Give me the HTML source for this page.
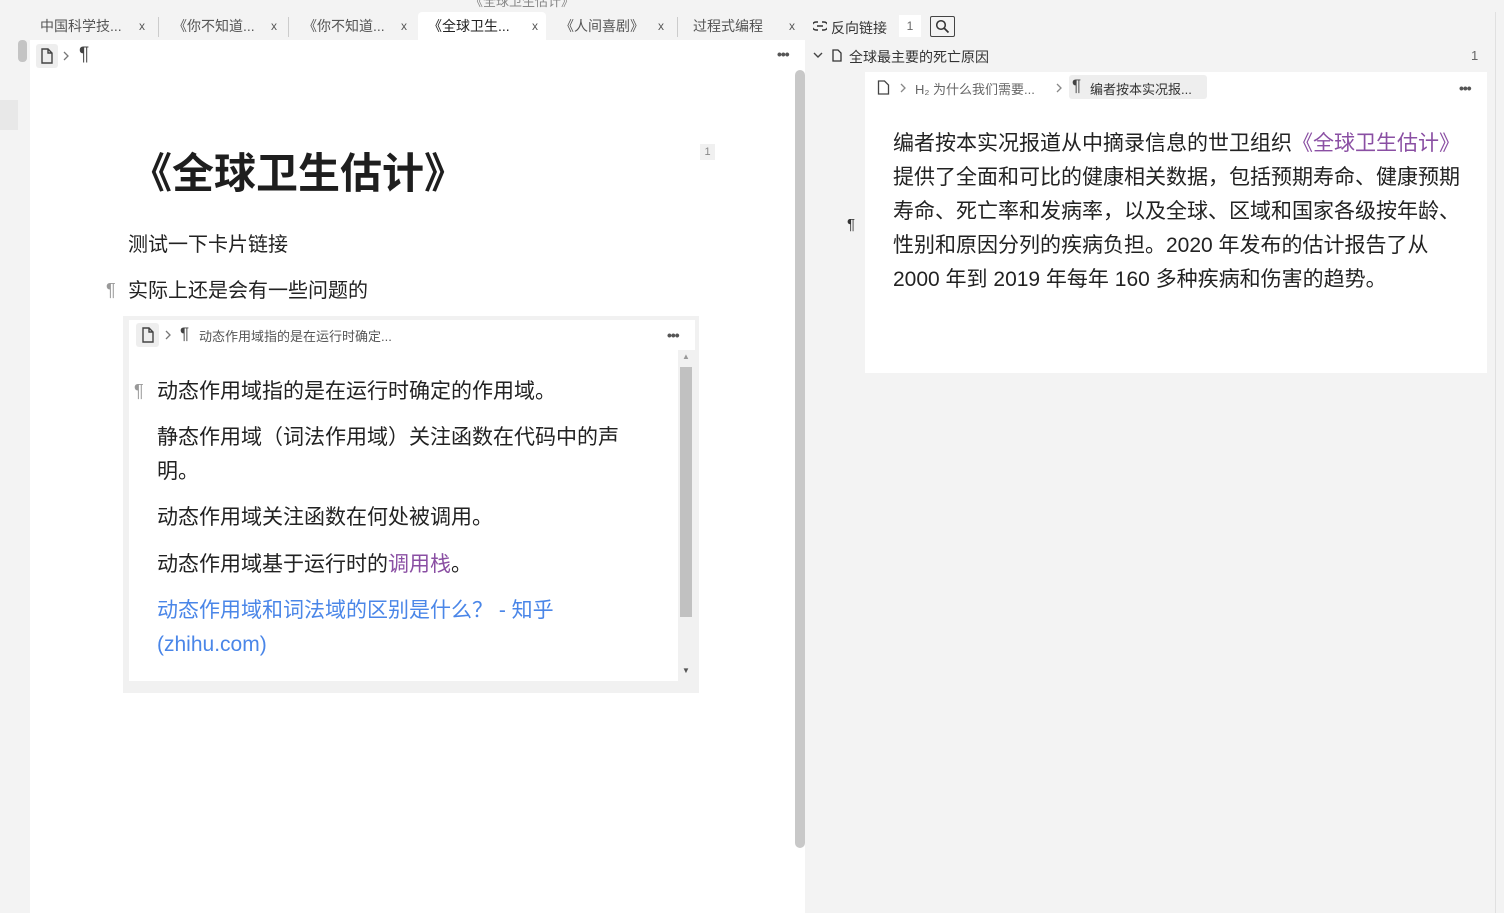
<!DOCTYPE html>
<html><head><meta charset="utf-8"><style>
*{margin:0;padding:0;box-sizing:border-box}
body{width:1504px;height:913px;overflow:hidden;background:#f3f3f3;font-family:"Liberation Sans","Noto Sans CJK SC",sans-serif;color:#222;position:relative}
.a{position:absolute;white-space:nowrap}
.tab{position:absolute;top:12px;height:28px;font-size:14px;color:#555;line-height:28px;padding-left:10px}
.tab .x{position:absolute;right:8px;top:0;font-size:12px;color:#555}
.sep{position:absolute;top:17px;width:1px;height:20px;background:#ccc}
.t{font-size:21px;line-height:34px;color:#222}
.dots{font-size:14px;color:#555;letter-spacing:-1px;font-weight:bold}
.chev{position:absolute}
</style></head><body>
<div class="a" style="left:470px;top:-9px;font-size:13px;color:#888">《全球卫生估计》</div>
<div class="tab" style="left:30px;width:123px">中国科学技...<span class="x">x</span></div>
<div class="sep" style="left:158px"></div>
<div class="tab" style="left:163px;width:122px">《你不知道...<span class="x">x</span></div>
<div class="sep" style="left:288px"></div>
<div class="tab" style="left:293px;width:122px">《你不知道...<span class="x">x</span></div>
<div class="tab" style="left:418px;width:128px;background:#fff;color:#222;border-radius:4px 4px 0 0">《全球卫生...<span class="x">x</span></div>
<div class="tab" style="left:550px;width:122px">《人间喜剧》<span class="x">x</span></div>
<div class="sep" style="left:677px"></div>
<div class="tab" style="left:683px;width:120px">过程式编程<span class="x">x</span></div>
<div class="a" style="left:0;top:100px;width:18px;height:30px;background:#e8e8e8"></div>
<div class="a" style="left:18px;top:40px;width:9px;height:22px;background:#c4c4c4;border-radius:4px"></div>
<div class="a" style="left:30px;top:40px;width:775px;height:873px;background:#fff"></div>
<div class="a" style="left:36px;top:44px;width:22px;height:24px;background:#eee;border-radius:3px"></div>
<svg class="a" style="left:40px;top:48px" width="14" height="16" viewBox="0 0 14 16"><path d="M2 1h6l4 4v10H2z M8 1v4h4" fill="none" stroke="#444" stroke-width="1.4"/></svg>
<svg class="chev" style="left:63px;top:51px" width="7" height="10" viewBox="0 0 7 10"><path d="M1 1l4 4-4 4" fill="none" stroke="#777" stroke-width="1.3"/></svg>
<div class="a" style="left:79px;top:44px;font-size:19px;color:#444">¶</div>
<div class="a dots" style="left:777px;top:46px">•••</div>
<div class="a" style="left:795px;top:70px;width:10px;height:778px;background:#c8c8c8;border-radius:5px"></div>
<div class="a" style="left:130px;top:140px;font-size:42px;font-weight:bold;color:#1e1e1e">《全球卫生估计》</div>
<div class="a" style="left:700px;top:144px;width:15px;height:16px;background:#f0f0f0;font-size:11px;color:#888;text-align:center;line-height:16px">1</div>
<div class="a t" style="left:128px;top:228px;font-size:20px">测试一下卡片链接</div>
<div class="a" style="left:106px;top:280px;font-size:18px;color:#999">¶</div>
<div class="a t" style="left:128px;top:274px;font-size:20px">实际上还是会有一些问题的</div>
<div class="a" style="left:123px;top:316px;width:576px;height:377px;background:#f1f1f1"></div>
<div class="a" style="left:129px;top:320px;width:566px;height:361px;background:#fff"></div>
<div class="a" style="left:136px;top:323px;width:23px;height:24px;background:#eee;border-radius:3px"></div>
<svg class="a" style="left:141px;top:327px" width="14" height="16" viewBox="0 0 14 16"><path d="M2 1h6l4 4v10H2z M8 1v4h4" fill="none" stroke="#444" stroke-width="1.4"/></svg>
<svg class="chev" style="left:165px;top:330px" width="7" height="10" viewBox="0 0 7 10"><path d="M1 1l4 4-4 4" fill="none" stroke="#777" stroke-width="1.3"/></svg>
<div class="a" style="left:180px;top:324px;font-size:17px;color:#444">¶</div>
<div class="a" style="left:199px;top:326px;font-size:13px;color:#555">动态作用域指的是在运行时确定...</div>
<div class="a dots" style="left:667px;top:327px">•••</div>
<div class="a" style="left:678px;top:350px;width:17px;height:331px;background:#f1f1f1"></div>
<div class="a" style="left:680px;top:367px;width:12px;height:250px;background:#c1c1c1"></div>
<div class="a" style="left:682px;top:352px;font-size:8px;color:#999">▲</div>
<div class="a" style="left:682px;top:666px;font-size:8px;color:#555">▼</div>
<div class="a" style="left:134px;top:381px;font-size:18px;color:#999">¶</div>
<div class="a t" style="left:157px;top:375px">动态作用域指的是在运行时确定的作用域。</div>
<div class="a t" style="left:157px;top:421px">静态作用域（词法作用域）关注函数在代码中的声</div>
<div class="a t" style="left:157px;top:455px">明。</div>
<div class="a t" style="left:157px;top:501px">动态作用域关注函数在何处被调用。</div>
<div class="a t" style="left:157px;top:548px">动态作用域基于运行时的<span style="color:#8a4fa3">调用栈</span>。</div>
<div class="a t" style="left:157px;top:594px;color:#4a86e8">动态作用域和词法域的区别是什么？ - 知乎</div>
<div class="a t" style="left:157px;top:628px;color:#4a86e8">(zhihu.com)</div>
<svg class="a" style="left:813px;top:21px" width="14" height="10" viewBox="0 0 14 10"><path d="M5 1H3a4 4 0 0 0 0 8h2M9 1h2a4 4 0 0 1 0 8H9M4 5h6" fill="none" stroke="#333" stroke-width="1.5"/></svg>
<div class="a" style="left:831px;top:18px;font-size:14px;color:#333">反向链接</div>
<div class="a" style="left:899px;top:15px;width:22px;height:22px;background:#fff;font-size:12px;color:#666;text-align:center;line-height:22px">1</div>
<div class="a" style="left:930px;top:16px;width:25px;height:21px;border:1px solid #444;border-radius:2px"></div>
<svg class="a" style="left:935px;top:19px" width="15" height="15" viewBox="0 0 15 15"><circle cx="6" cy="6" r="4.3" fill="none" stroke="#333" stroke-width="1.5"/><path d="M9 9l4.5 4.5" stroke="#333" stroke-width="1.7"/></svg>
<svg class="a" style="left:813px;top:52px" width="10" height="7" viewBox="0 0 10 7"><path d="M1 1l4 4 4-4" fill="none" stroke="#444" stroke-width="1.4"/></svg>
<svg class="a" style="left:832px;top:49px" width="10" height="13" viewBox="0 0 10 13"><path d="M1 1h5l3 3v8H1z" fill="none" stroke="#333" stroke-width="1.3"/></svg>
<div class="a" style="left:849px;top:47px;font-size:14px;color:#333">全球最主要的死亡原因</div>
<div class="a" style="left:1471px;top:48px;font-size:13px;color:#666">1</div>
<div class="a" style="left:1495px;top:12px;width:1px;height:901px;background:#e0e0e0"></div>
<div class="a" style="left:865px;top:72px;width:622px;height:301px;background:#fff"></div>
<svg class="a" style="left:877px;top:80px" width="13" height="15" viewBox="0 0 13 15"><path d="M1.5 1h6l4 4v9h-10z" fill="none" stroke="#444" stroke-width="1.3"/></svg>
<svg class="chev" style="left:900px;top:83px" width="7" height="10" viewBox="0 0 7 10"><path d="M1 1l4 4-4 4" fill="none" stroke="#888" stroke-width="1.3"/></svg>
<div class="a" style="left:915px;top:79px;font-size:13px;color:#666">H₂ 为什么我们需要...</div>
<svg class="chev" style="left:1056px;top:83px" width="7" height="10" viewBox="0 0 7 10"><path d="M1 1l4 4-4 4" fill="none" stroke="#888" stroke-width="1.3"/></svg>
<div class="a" style="left:1069px;top:75px;width:138px;height:24px;background:#eee;border-radius:3px"></div>
<div class="a" style="left:1072px;top:76px;font-size:17px;color:#444">¶</div>
<div class="a" style="left:1090px;top:79px;font-size:13px;color:#333">编者按本实况报...</div>
<div class="a dots" style="left:1459px;top:80px">•••</div>
<div class="a" style="left:847px;top:216px;font-size:15px;color:#333">¶</div>
<div class="a t" style="left:893px;top:127px">编者按本实况报道从中摘录信息的世卫组织<span style="color:#8a4fa3">《全球卫生估计》</span></div>
<div class="a t" style="left:893px;top:161px">提供了全面和可比的健康相关数据，包括预期寿命、健康预期</div>
<div class="a t" style="left:893px;top:195px">寿命、死亡率和发病率，以及全球、区域和国家各级按年龄、</div>
<div class="a t" style="left:893px;top:229px">性别和原因分列的疾病负担。2020 年发布的估计报告了从</div>
<div class="a t" style="left:893px;top:263px">2000 年到 2019 年每年 160 多种疾病和伤害的趋势。</div>
</body></html>
